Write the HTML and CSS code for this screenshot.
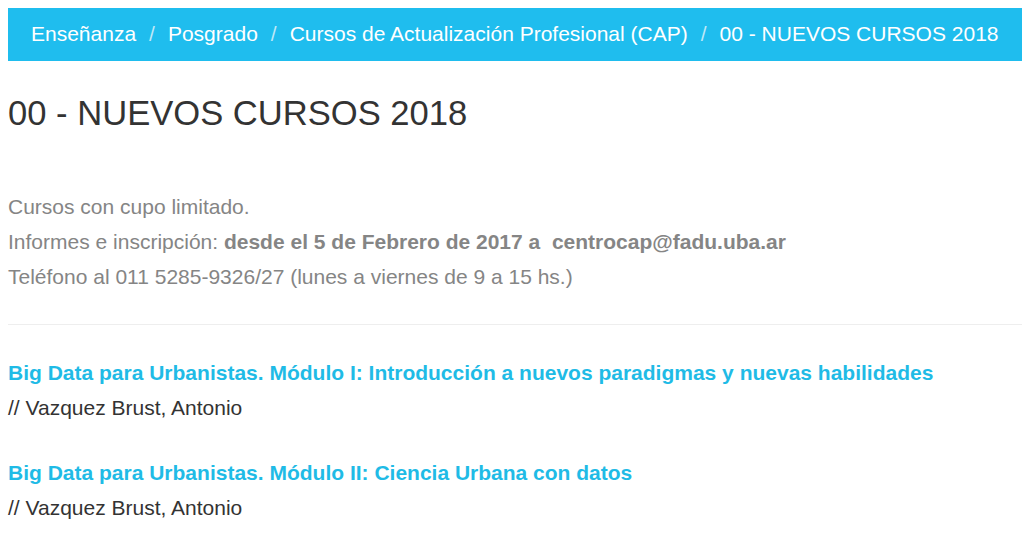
FILE: index.html
```html
<!DOCTYPE html>
<html lang="es">
<head>
<meta charset="utf-8">
<title>00 - NUEVOS CURSOS 2018</title>
<link rel="stylesheet" href="styles.css">
</head>
<body>
<div class="page">
  <nav class="crumbs">
    <a href="#">Enseñanza</a><span class="sep">/</span>
    <a href="#">Posgrado</a><span class="sep">/</span>
    <a href="#">Cursos de Actualización Profesional (CAP)</a><span class="sep">/</span>
    <span class="current">00 - NUEVOS CURSOS 2018</span>
  </nav>
  <h1 class="title">00 - NUEVOS CURSOS 2018</h1>
  <div class="intro">
    <p>Cursos con cupo limitado.</p>
    <p>Informes e inscripción: <strong>desde el 5 de Febrero de 2017 a &nbsp;centrocap@fadu.uba.ar</strong></p>
    <p>Teléfono al 011 5285-9326/27 (lunes a viernes de 9 a 15 hs.)</p>
  </div>
  <hr class="divider">
  <ul class="courses">
    <li class="course">
      <a class="course-title" href="#">Big Data para Urbanistas. Módulo I: Introducción a nuevos paradigmas y nuevas habilidades</a>
      <div class="course-author">// Vazquez Brust, Antonio</div>
    </li>
    <li class="course">
      <a class="course-title" href="#">Big Data para Urbanistas. Módulo II: Ciencia Urbana con datos</a>
      <div class="course-author">// Vazquez Brust, Antonio</div>
    </li>
  </ul>
</div>
</body>
</html>
```
FILE: styles.css
```css
html, body { margin: 0; padding: 0; background: #fff; }
body { font-family: "Liberation Sans", Arial, sans-serif; color: #333; }
.page { margin: 8px 0 0 8px; width: 1014px; }
.crumbs {
  background: #1fbdee;
  height: 53px;
  box-sizing: border-box;
  display: flex;
  align-items: center;
  padding: 0 0 2px 23px;
  font-size: 21px;
  color: #fff;
  white-space: nowrap;
}
.crumbs a, .crumbs .current { color: #fff; text-decoration: none; }
.crumbs .sep { color: #bfe8f7; padding: 0 13px; }
.title {
  font-weight: normal;
  font-size: 34.6px;
  color: #333;
  margin: 32px 0 0 0;
  line-height: 40px;
}
.intro { margin-top: 56px; color: #858585; font-size: 21px; }
.intro p { margin: 0; line-height: 35px; }
.intro strong { font-weight: bold; }
.divider { border: 0; border-top: 1px solid #eee; margin: 30px 0 0 0; }
.courses { list-style: none; margin: 30px 0 0 0; padding: 0; }
.course { margin-bottom: 30px; }
.course-title {
  font-weight: bold;
  font-size: 21px;
  color: #1fbbe6;
  text-decoration: none;
  line-height: 35px;
  display: block;
}
.course-author {
  font-size: 21px;
  color: #333;
  line-height: 35px;
}
```
